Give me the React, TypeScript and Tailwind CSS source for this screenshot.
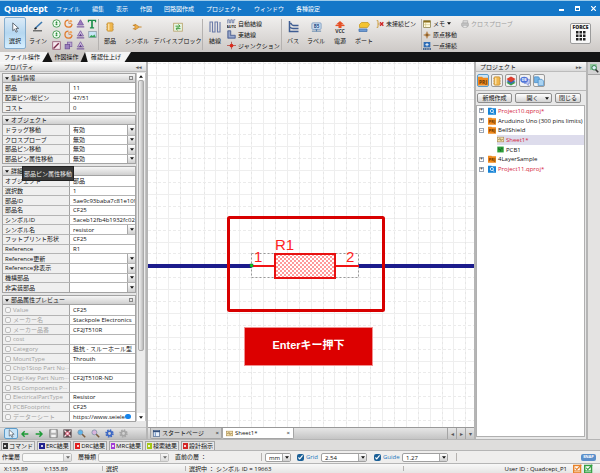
import { useState, type ReactNode } from "react";

const FONT = "font-['Open_Sans','Noto_Sans_CJK_JP',sans-serif]";
const MONO_TEXT = "'Open Sans', sans-serif";

/* ---------- icons ---------- */

function Glyph({ size = 10, children }: { size?: number; children: ReactNode }) {
  return (
    <svg width={size} height={size} viewBox="0 0 12 12" fill="none" className="shrink-0" aria-hidden="true">
      {children}
    </svg>
  );
}

function Letter({ x = 6, y = 8, s = 5, fill = "#fff", children }: { x?: number; y?: number; s?: number; fill?: string; children: string }) {
  return (
    <text x={x} y={y} fontSize={s} fontWeight="700" textAnchor="middle" fill={fill} fontFamily={MONO_TEXT}>
      {children}
    </text>
  );
}

const CursorIcon = ({ size = 10 }: { size?: number }) => (
  <Glyph size={size}>
    <path d="M3 1l6.500 6H6.500l1.500 3.500-1.500.6L5 7.800 3 9.500z" fill="#fff" stroke="#4a5560" strokeWidth=".9" />
  </Glyph>
);
const LineIcon = () => (
  <Glyph size={12}>
    <path d="M3 7.500L10 1" stroke="#3b78b0" strokeWidth="1.600" />
    <path d="M2.500 8l2-1" stroke="#222" strokeWidth="1.500" />
    <path d="M1 9.800h9" stroke="#555" strokeWidth="1.200" />
  </Glyph>
);
const CircleIcon = () => (
  <Glyph size={9}>
    <circle cx="6" cy="6" r="5" fill="#effaf0" stroke="#4f9f5a" strokeWidth="1.300" />
    <path d="M6 2.800l1.500 2.500h-3z" fill="#2e8f3d" />
    <circle cx="6" cy="7" r="1.300" fill="#2e8f3d" />
  </Glyph>
);
const ArcIcon = () => (
  <Glyph size={9}>
    <path d="M6 1.500a4.700 4.700 0 1 0 4.700 5" stroke="#e07a2c" strokeWidth="1.700" />
    <path d="M6.500 6V2.500M6.500 6H10" stroke="#d98c55" strokeWidth="1.200" />
    <circle cx="9" cy="3" r="1.800" fill="#f0a65f" />
  </Glyph>
);
const TriangleIcon = ({ inner = false }: { inner?: boolean }) => (
  <Glyph size={9}>
    <path d="M6 1l4 7H2z" fill={inner ? "#c9b6dc" : "#9a7bbd"} stroke="#75559d" />
    <path d="M1 10.500h10" stroke="#75559d" strokeWidth="1.500" />
    {inner && <path d="M4 8l2-3 2 3z" fill="#5b3b86" />}
  </Glyph>
);
const TextIcon = () => (
  <Glyph size={10}>
    <path d="M1 1h10v3H9.500V2.500H7V10h1.500v1.300h-5V10H5V2.500H2.500V4H1z" fill="#1d8f4b" />
  </Glyph>
);
const PictureIcon = () => (
  <Glyph size={9}>
    <rect x="1" y="2" width="10" height="8" fill="#c9e6f7" stroke="#8a9aa5" />
    <path d="M1.500 9.500l3-3 2 1.500 2-2 2 3.500z" fill="#36a256" />
  </Glyph>
);
const EditIcon = () => (
  <Glyph size={9}>
    <rect x="1" y="1" width="10" height="10" fill="#f6eaf0" stroke="#8d4b68" />
    <path d="M2 10L9 3" stroke="#7b2947" strokeWidth="1.800" />
  </Glyph>
);
const CopyIcon = () => (
  <Glyph size={9}>
    <rect x="4.500" y="1.500" width="6" height="6" fill="#bba6d3" stroke="#7d60a2" />
    <rect x="1.500" y="4.500" width="6" height="6" fill="#9a7fbc" stroke="#6d4f94" />
  </Glyph>
);
const PartIcon = ({ size = 10 }: { size?: number }) => (
  <Glyph size={size}>
    <path d="M1.500 3h9M1.500 6h9M1.500 9h9" stroke="#c9a460" strokeWidth=".9" />
    <rect x="2.500" y="1" width="7" height="10" rx="1" fill="#efb64d" stroke="#c08a30" strokeWidth=".8" />
    <path d="M4.500 2v8" stroke="#fbe3ad" strokeWidth="1.600" />
  </Glyph>
);
const SymbolIcon = () => (
  <Glyph>
    <path d="M1 4h3M1 8h3M9 6h2.500" stroke="#c88a32" strokeWidth="1.300" />
    <path d="M3.500 2.500v7L9 6z" fill="#eeb04a" stroke="#c07c25" strokeWidth=".8" />
  </Glyph>
);
const DeviceIcon = () => (
  <Glyph>
    <rect x=".8" y="1.500" width="10.400" height="9.500" fill="#e9f6e3" stroke="#b8a26a" />
    <path d="M3 5h5M6.500 3l2 2-2 2M9 8H4M5.500 6.500L3.500 8l2 1.800" stroke="#3c9a3a" strokeWidth="1.200" />
  </Glyph>
);
const WireIcon = () => (
  <Glyph size={12}>
    <path d="M1 11V1h2.500v10H6V1h2.500v10H11V1" stroke="#6b7ba8" strokeWidth="1.100" />
  </Glyph>
);
const AutoWireIcon = () => (
  <Glyph size={9}>
    <path d="M1 6V1h2v4h2V1h2v4h2V1h2" stroke="#5a6b9c" />
    <Letter y={11.500} s={5} fill="#222">AUTO</Letter>
  </Glyph>
);
const BundleIcon = () => (
  <Glyph size={9}>
    <path d="M1 1h4v6h6v4H1z" fill="#7183b1" stroke="#4b5f92" />
    <path d="M3 2v7h7" stroke="#b7c3df" />
  </Glyph>
);
const JunctionIcon = () => (
  <Glyph size={9}>
    <path d="M0 6h12M6 1v10" stroke="#b45b52" strokeWidth="1.200" />
    <circle cx="6" cy="6" r="2.500" fill="#d92a1c" />
  </Glyph>
);
const BusIcon = () => (
  <Glyph size={12}>
    <path d="M2.500 0v10.500h9M2.500 2.500h1.500q1 2 2.500 2H11.500M2.500 6q2 1.500 3.500 1.500H11.500" stroke="#3f5d92" strokeWidth="1.500" />
  </Glyph>
);
const LabelIcon = () => (
  <Glyph size={11}>
    <rect x="1" y="1" width="10" height="7" rx="1" fill="#cfe0f3" stroke="#7e9cc0" />
    <path d="M1 10h10" stroke="#587fa9" />
    <path d="M5 8l1 3 1-3z" fill="#4b79ad" />
    <Letter y={6.500} s={5} fill="#274f86">B5</Letter>
  </Glyph>
);
const VccIcon = () => (
  <Glyph size={12}>
    <path d="M6 0l4 3.500H7.500V7h-3V3.500H2z" fill="#e65026" />
    <path d="M1.500 4.500h9" stroke="#e65026" strokeWidth="1.200" />
    <Letter y={11.500} s={5} fill="#333">VCC</Letter>
  </Glyph>
);
const PortIcon = () => (
  <Glyph size={12}>
    <path d="M3.500 1.500h6.500l1.500 2-2 3H1.500V3.500z" fill="#f4c431" stroke="#c79b25" strokeWidth=".8" />
    <path d="M1 8h8v2.500H1z" fill="#6e9bd3" stroke="#4876b1" strokeWidth=".8" />
  </Glyph>
);
const NoPinIcon = () => (
  <Glyph size={8}>
    <path d="M1 1h2v10H1M3 6h3" stroke="#c9962d" strokeWidth="1.300" />
    <path d="M6 3.500l5 5M11 3.500l-5 5" stroke="#cf2222" strokeWidth="2" />
  </Glyph>
);
const MemoIcon = () => (
  <Glyph size={8}>
    <rect x="1" y="1" width="10" height="10" fill="#fffbe0" stroke="#7c7135" />
    <path d="M1 2.500h10" stroke="#8c6f1d" strokeWidth="2.500" />
    <path d="M4 4v7M1 7h10" stroke="#cbb96d" strokeWidth=".8" />
  </Glyph>
);
const OriginIcon = () => (
  <Glyph size={8}>
    <path d="M6 0l2 4 4 2-4 2-2 4-2-4-4-2 4-2z" fill="#b88a55" />
    <circle cx="6" cy="6" r="1.500" fill="#7e5526" />
  </Glyph>
);
const OnePointIcon = () => (
  <Glyph size={8}>
    <rect x="1" y="0" width="10" height="8" fill="#2f6db5" />
    <path d="M6 1.500v5M3.500 4h5" stroke="#fff" strokeWidth="1.300" />
    <path d="M0 10.500h12" stroke="#234f87" strokeWidth="2" strokeDasharray="2 .6" />
  </Glyph>
);
const PrinterIcon = () => (
  <Glyph size={8}>
    <path d="M3 1h7v4H3z" fill="#ddd" stroke="#aaa" />
    <rect x="1" y="4.500" width="10" height="5" rx="1" fill="#c5c5c5" stroke="#a5a5a5" />
    <path d="M3 8h6v3H3z" fill="#eee" stroke="#aaa" />
  </Glyph>
);
const ArrowIcon = ({ back = false }: { back?: boolean }) => (
  <Glyph size={8}>
    <path d={back ? "M11 6H2M5.500 2L1.500 6l4 4" : "M1 6h9M6.500 2l4 4-4 4"} stroke="#1e9a37" strokeWidth="2.200" />
  </Glyph>
);
const SaveIcon = () => (
  <Glyph size={9}>
    <rect x="1" y="1" width="10" height="10" fill="#b4b4b4" stroke="#777" />
    <path d="M3 1h6v4H3zM3 7.500h6V11H3z" fill="#f3f3f3" />
  </Glyph>
);
const FitIcon = () => (
  <Glyph size={9}>
    <rect x=".5" y=".5" width="11" height="11" fill="#5a4a4e" />
    <path d="M2 2l8 8M10 2l-8 8" stroke="#fff" strokeWidth="1.600" />
    <rect x="4" y="4" width="4" height="4" fill="#f4eef0" stroke="#e24566" />
  </Glyph>
);
const ZoomIcon = ({ tint }: { tint: string }) => (
  <Glyph size={9}>
    <circle cx="4.500" cy="4.500" r="3.300" fill={tint} stroke="#7a8fa8" strokeWidth="1" />
    <path d="M7 7l4 4" stroke="#7a5a3c" strokeWidth="2" />
  </Glyph>
);
const GearIcon = ({ color }: { color: string }) => (
  <Glyph size={9}>
    <circle cx="6" cy="6" r="4.600" stroke={color} strokeWidth="2" strokeDasharray="2 1.600" />
    <circle cx="6" cy="6" r="3" stroke={color} strokeWidth="2.200" />
  </Glyph>
);
const SheetIcon = () => (
  <Glyph size={7}>
    <rect x=".5" y="2" width="11" height="8" fill="#f3e0ad" stroke="#a98a4c" />
    <path d="M2 6h2l1-2 2 4 1-2h2" stroke="#7d6430" />
  </Glyph>
);
const PcbIcon = () => (
  <Glyph size={7}>
    <rect x=".5" y="1" width="11" height="10" fill="#2e9e3b" />
    <path d="M3 3v3h3v3M8 3v2h2" stroke="#14601e" strokeWidth="1.200" />
  </Glyph>
);
const StartIcon = () => (
  <Glyph size={7}>
    <rect x=".5" y="1" width="11" height="10" fill="#e8f0fa" stroke="#34517d" />
    <path d="M0 2.500h12" stroke="#34517d" strokeWidth="2.500" />
    <path d="M4 4v7" stroke="#5b83bd" strokeWidth="1.500" />
  </Glyph>
);
const ProjectIcon = ({ size = 8, blue = false }: { size?: number; blue?: boolean }) => (
  <Glyph size={size}>
    <path d="M0 1h5l1 1h6v9.500H0z" fill={blue ? "#1583d6" : "#ef8a1d"} />
    {blue ? (
      <>
        <circle cx="5.800" cy="6" r="2.400" stroke="#fff" strokeWidth="1.200" />
        <path d="M7 7.500l2 2.500" stroke="#fff" strokeWidth="1.200" />
      </>
    ) : (
      <Letter y={9} s={6} fill="#6b3503">PRJ</Letter>
    )}
  </Glyph>
);
const LayersIcon = () => (
  <Glyph>
    <path d="M6 5.500l5.500 2.500L6 11.500.5 8z" fill="#3ca44a" />
    <path d="M6 3.500l5.500 2.500L6 9.500.5 6z" fill="#3a68b8" />
    <path d="M6 .5l5.500 3L6 7.500.5 3.500z" fill="#dd3c2c" />
  </Glyph>
);
const ChatIcon = () => (
  <Glyph>
    <path d="M5 4h6.500v5H10v2.500L7.500 9H5z" fill="#b9c5ef" stroke="#6e83d0" strokeWidth=".7" />
    <ellipse cx="5" cy="4.500" rx="4.700" ry="3.700" fill="#4f74d8" />
    <Letter x={5} y={6.200} s={4}>DB</Letter>
  </Glyph>
);
const PagesIcon = () => (
  <Glyph>
    <path d="M.5 1h5l1 1.500V8h-6z" fill="#72b3e6" stroke="#4187c4" strokeWidth=".8" />
    <path d="M5 4h4.500l2 2v5.500H5z" fill="#a9d3f2" stroke="#4187c4" strokeWidth=".8" />
  </Glyph>
);
const FindIcon = () => (
  <Glyph size={9}>
    <rect x="0" y="0" width="9" height="8" fill="#8fc79b" />
    <circle cx="5.500" cy="5" r="3" fill="#d9f0f5" stroke="#2c7444" strokeWidth="1.200" />
    <path d="M7.500 7.500l3.500 3.500" stroke="#333" strokeWidth="2" />
  </Glyph>
);
const CheckBadge = ({ color }: { color: string }) => (
  <Glyph size={9}>
    <rect x="0" y="1" width="11" height="11" fill={color} />
    <rect x="2" y="3" width="7" height="5.500" fill="#fff" />
    <path d="M3 5l2 2.500L11 1" stroke={color} strokeWidth="1.600" />
    <path d="M1.500 10.300h8" stroke="#fff" strokeWidth=".8" />
  </Glyph>
);
const Down = () => (
  <svg width="4" height="3" viewBox="0 0 5 3" className="shrink-0" aria-hidden="true">
    <path d="M0 0h5L2.500 3z" fill="#111" />
  </svg>
);

/* ---------- shared controls ---------- */

function Pick({ label, value, className = "" }: { label: string; value: string; className?: string }) {
  return (
    <span className={`flex min-w-0 items-stretch bg-white ${className}`}>
      <select aria-label={label} defaultValue={value} className="min-w-0 flex-1 appearance-none truncate bg-transparent pl-[3px] outline-none">
        <option value={value}>{value}</option>
      </select>
      <span className="pointer-events-none flex w-2 items-center justify-center border-l border-[#a8a8a8] bg-linear-to-b from-white to-[#cfcfcf]">
        <Down />
      </span>
    </span>
  );
}

function BigTool({ icon, label, className = "", active = false }: { icon: ReactNode; label: string; className?: string; active?: boolean }) {
  return (
    <button
      className={`flex h-8 shrink-0 flex-col items-center justify-between rounded-xs border pt-[3px] pb-[3px] whitespace-nowrap ${
        active ? "border-[#86aece] bg-linear-to-b from-[#dcebf7] via-[#b5d7f0] to-[#d6efff]" : "border-transparent"
      } ${className}`}
    >
      <span className="flex h-3 items-center">{icon}</span>
      <span>{label}</span>
    </button>
  );
}

function SmallTool({ icon, label, muted = false, children }: { icon: ReactNode; label: string; muted?: boolean; children?: ReactNode }) {
  return (
    <button className={`flex h-[11px] items-center gap-[2px] whitespace-nowrap ${muted ? "text-[#9c9c9c]" : ""}`}>
      {icon}
      <span>{label}</span>
      {children}
    </button>
  );
}

const Divider = () => <span className="my-[2px] w-px shrink-0 self-stretch bg-[#b5b2b0]" />;

/* ---------- title bar and ribbon ---------- */

const MENUS = [
  "ファイル", "編集", "表示", "作図", "回路図作成", "プロジェクト", "ウィンドウ", "各種設定",
];

function TitleBar() {
  return (
    <header className="flex h-4 shrink-0 items-center border-t border-[#9ccbea] bg-[#1477c8] pr-1 pl-1 text-white">
      <span className="w-[52px] text-[9px] leading-none font-bold">Quadcept</span>
      <nav className="flex flex-1 gap-3 whitespace-nowrap">
        {MENUS.map((m) => (
          <button key={m}>{m}</button>
        ))}
      </nav>
      <div className="flex items-center gap-[11px]">
        <button aria-label="最小化" className="h-[5px] w-[5px] border-b-2 border-white" />
        <button aria-label="元に戻す" className="h-[5px] w-[5px] border border-t-2 border-white" />
        <button aria-label="閉じる">
          <svg width="5" height="5" viewBox="0 0 5 5"><path d="M0 0l5 5M5 0L0 5" stroke="#fff" strokeWidth="1.200" /></svg>
        </button>
      </div>
    </header>
  );
}

const DRAW_TOOLS: [string, ReactNode][] = [
  ["円", <CircleIcon />], ["円弧", <ArcIcon />], ["三角", <TriangleIcon />], ["文字", <TextIcon />],
  ["楕円", <CircleIcon />], ["扇形", <ArcIcon />], ["多角形", <TriangleIcon inner />], ["画像", <PictureIcon />],
  ["編集", <EditIcon />], ["複製", <CopyIcon />], ["図形", <TriangleIcon inner />],
];

function Ribbon() {
  return (
    <div className="flex h-9 shrink-0 items-start bg-linear-to-b from-[#f1f0ef] to-[#cdc9c6] pt-px pl-1">
      <BigTool icon={<CursorIcon size={11} />} label="選択" active className="w-[22px]" />
      <BigTool icon={<LineIcon />} label="ライン" className="w-6" />
      <div className="grid grid-cols-[repeat(4,12px)] pt-px">
        {DRAW_TOOLS.map(([name, icon]) => (
          <button key={name} aria-label={name} className="flex h-[11px] items-center justify-center">
            {icon}
          </button>
        ))}
      </div>
      <Divider />
      <BigTool icon={<PartIcon />} label="部品" className="w-[22px]" />
      <BigTool icon={<SymbolIcon />} label="シンボル" className="w-8" />
      <BigTool icon={<DeviceIcon />} label="デバイスブロック" className="w-[49px]" />
      <Divider />
      <BigTool icon={<WireIcon />} label="結線" className="w-6" />
      <div className="w-[54px] pt-px">
        <SmallTool icon={<AutoWireIcon />} label="自動結線" />
        <SmallTool icon={<BundleIcon />} label="束結線" />
        <SmallTool icon={<JunctionIcon />} label="ジャンクション" />
      </div>
      <Divider />
      <BigTool icon={<BusIcon />} label="バス" className="w-[22px]" />
      <BigTool icon={<LabelIcon />} label="ラベル" className="w-6" />
      <BigTool icon={<VccIcon />} label="電源" className="w-6" />
      <BigTool icon={<PortIcon />} label="ポート" className="w-6" />
      <div className="w-[45px] pt-px">
        <SmallTool icon={<NoPinIcon />} label="未接続ピン" />
      </div>
      <Divider />
      <div className="w-[39px] pt-px pl-px">
        <SmallTool icon={<MemoIcon />} label="メモ"><Down /></SmallTool>
        <SmallTool icon={<OriginIcon />} label="原点移動" />
        <SmallTool icon={<OnePointIcon />} label="一点接続" />
      </div>
      <div className="flex-1 pt-px">
        <SmallTool icon={<PrinterIcon />} label="クロスプローブ" muted />
      </div>
      <button className="mt-[6px] mr-[9px] flex h-[21px] w-[21px] flex-col items-center rounded-xs border border-[#9b9b9b] bg-[#f8f8f8]">
        <span className="text-[5px] leading-[7px] font-extrabold text-[#222]">FORCE</span>
        <svg width="10" height="10" viewBox="0 0 10 10" aria-hidden="true">
          {[0, 3.500, 7].map((y) => [0, 3.500, 7].map((x) => <rect key={`${x}-${y}`} x={x} y={y} width="2.500" height="2.500" fill="#222" />))}
        </svg>
      </button>
    </div>
  );
}

function RibbonTabs() {
  const tab = "flex h-full items-center justify-center whitespace-nowrap";
  return (
    <div className="flex h-[10px] shrink-0 bg-[#141414]">
      <button className={`${tab} w-12 bg-[#f4f4f4] pr-1 [clip-path:polygon(0_0,100%_0,88%_100%,0_100%)]`}>ファイル操作</button>
      <button className={`${tab} w-[37px] bg-[#cdc9c6] [clip-path:polygon(0_0,100%_0,88%_100%,12%_100%)]`}>作図操作</button>
      <button className={`${tab} w-[46px] bg-[#f4f4f4] pr-1 [clip-path:polygon(0_0,100%_0,86%_100%,6%_100%)]`}>確認仕上げ</button>
    </div>
  );
}

/* ---------- property panel ---------- */

type Row = [name: string, value: string, kind?: "pick"];

const SUMMARY: Row[] = [["部品", "11"], ["配置ピン/総ピン", "47/51"], ["コスト", "0"]];
const OBJECT: Row[] = [
  ["ドラッグ移動", "有効", "pick"], ["クロスプローブ", "無効", "pick"],
  ["部品ピン移動", "無効", "pick"], ["部品ピン属性移動", "無効", "pick"],
];
const DETAIL: Row[] = [
  ["オブジェクト", "部品"], ["選択数", "1"], ["部品ID", "5ae9c93baba7c81e109"], ["部品名", "CF25"],
  ["シンボルID", "5aceb12fb4b1932fc02"], ["シンボル名", "resistor", "pick"], ["フットプリント形状", "CF25"],
  ["Reference", "R1"], ["Reference更新", "", "pick"], ["Reference非表示", "", "pick"],
  ["機構部品", "", "pick"], ["非実装部品", "", "pick"],
];
const PREVIEW: Row[] = [
  ["Value", "CF25"], ["メーカー名", "Stackpole Electronics"], ["メーカー品番", "CF2JT510R"], ["cost", ""],
  ["Category", "抵抗 - スルーホール型"], ["MountType", "Throuth"], ["Chip1Stop Part Nu···", ""],
  ["Digi-Key Part Num···", "CF2JT510R-ND"], ["RS Components P···", ""], ["ElectricalPartType", "Resistor"],
  ["PCBFootprint", "CF25"], ["データーシート", "https://www.seiele"],
];

function Section({ title, rows, height, boxed = false, checks = false }: { title: string; rows: Row[]; height: string; boxed?: boolean; checks?: boolean }) {
  return (
    <section className="border-x border-b border-[#a3a3a3]">
      <h3 className="flex h-[10px] items-center gap-[2px] border-y border-[#a3a3a3] bg-linear-to-b from-[#f6f6f6] to-[#cfcfcf] px-[2px] font-normal">
        <Down />
        <span className="flex-1">{title}</span>
        {boxed && <span className="h-[4px] w-[4px] border border-[#888]" />}
      </h3>
      <div className={`grid auto-rows-fr ${height}`}>
        {rows.map(([name, value, kind], i) => (
          <div key={name} className={`grid min-h-0 grid-cols-[67px_minmax(0,1fr)] ${i ? "border-t border-[#b4b4b4]" : ""}`}>
            {checks ? (
              <label className="flex items-center gap-[2px] overflow-hidden border-r border-[#a3a3a3] bg-[#efefef] pl-[2px] whitespace-nowrap text-[#a2a2a2]">
                <input type="checkbox" disabled className="h-[6px] w-[6px] shrink-0 appearance-none rounded-xs border border-[#bdbdbd] bg-[#f5f5f5]" />
                {name}
              </label>
            ) : (
              <span className="flex items-center overflow-hidden border-r border-[#a3a3a3] bg-[#efefef] pl-[2px] whitespace-nowrap">{name}</span>
            )}
            {kind === "pick" ? (
              <Pick label={name} value={value} />
            ) : (
              <span className="flex items-center overflow-hidden bg-white pl-[3px] whitespace-nowrap">
                {value}
                {name === "データーシート" && <span className="h-[5px] w-[6px] shrink-0 rounded-full bg-[#1684ea]" />}
              </span>
            )}
          </div>
        ))}
      </div>
    </section>
  );
}

function PanelTitle({ title, mark }: { title: string; mark: string }) {
  return (
    <h2 className="flex h-[10px] shrink-0 items-center justify-between border-b border-[#bcbcbc] bg-linear-to-b from-[#fbfbfb] to-[#d9d9d9] px-1 font-normal">
      <span>{title}</span>
      <span className="text-[5px] font-bold text-[#555]">{mark}</span>
    </h2>
  );
}

const PANEL_TOOLS: [string, ReactNode][] = [
  ["戻る", <ArrowIcon back />], ["進む", <ArrowIcon />], ["保存", <SaveIcon />], ["全体表示", <FitIcon />],
  ["拡大", <ZoomIcon tint="#5db4ea" />], ["縮小", <ZoomIcon tint="#d9b3dc" />],
  ["設定", <GearIcon color="#3a66c4" />], ["その他", <GearIcon color="#a5a5a5" />],
];

function PropertyPanel() {
  return (
    <aside className="relative flex w-[148px] shrink-0 flex-col border-r-2 border-[#b5b5b5] bg-[#e6e6e6]">
      <PanelTitle title="プロパティ" mark="◂◂" />
      <div className="flex min-h-0 flex-1 pt-px pl-[2px]">
        <div className="flex min-w-0 flex-1 flex-col gap-[2px]">
          <Section title="集計情報" rows={SUMMARY} height="h-[29px]" boxed />
          <Section title="オブジェクト" rows={OBJECT} height="h-[38px]" />
          <Section title="詳細" rows={DETAIL} height="h-[116px]" />
          <Section title="部品属性プレビュー" rows={PREVIEW} height="h-[116px]" boxed checks />
        </div>
        <div className="mb-[6px] flex w-[10px] flex-col items-center border-x border-[#c4c4c4] bg-[#ececec]">
          <span className="flex h-[7px] w-full rotate-180 items-center justify-center bg-white"><Down /></span>
          <span className="h-[78%] w-[6px] rounded-xs border border-[#aaa] bg-linear-to-r from-[#f0f0f0] via-[#d8d8d8] to-[#b9b9b9]" />
          <span className="flex-1" />
          <span className="flex h-[8px] w-full items-center justify-center bg-white"><Down /></span>
        </div>
      </div>
      <div role="tooltip" className="absolute top-[104px] left-[22px] flex h-[15px] items-center border border-[#222] bg-[#383838] px-px whitespace-nowrap text-[#eee]">
        部品ピン属性移動
      </div>
      <div className="flex h-3 shrink-0 items-center border-t border-[#c2c2c2] bg-linear-to-b from-[#e5e5e5] to-[#bdbdbd] pl-1">
        <button aria-label="選択" className="flex h-[11px] w-[14px] items-center justify-center rounded-xs border border-[#5c9bc9] bg-[#c8e4f8]">
          <CursorIcon size={9} />
        </button>
        {PANEL_TOOLS.map(([name, icon]) => (
          <button key={name} aria-label={name} className="flex w-[14px] items-center justify-center">
            {icon}
          </button>
        ))}
      </div>
    </aside>
  );
}

/* ---------- drawing area ---------- */

function Schematic() {
  const lines = Array.from({ length: 100 }, (_, i) => i);
  return (
    <svg className="absolute inset-0 h-full w-full" aria-label="回路図">
      <defs>
        <pattern id="hatch" width="4" height="4" patternUnits="userSpaceOnUse">
          <rect width="4" height="4" fill="#fff" />
          <rect width="2" height="2" fill="#ff9a9a" />
          <rect x="2" y="2" width="2" height="2" fill="#ff9a9a" />
        </pattern>
      </defs>
      {lines.map((i) => {
        const x = Math.round(7.900 + i * 11.900) + 0.5;
        const y = Math.round(1 + i * 11.900) + 0.5;
        const solidX = i % 2 === 0 ? false : true;
        return (
          <g key={i}>
            <line x1={x} x2={x} y1="0" y2="100%" stroke={solidX ? "#eeeeee" : "#f1f1f1"} />
            {!solidX && <line x1={x} x2={x} y1="0" y2="100%" stroke="#e6e6e6" strokeDasharray="2 3" />}
            <line y1={y} y2={y} x1="0" x2="100%" stroke={solidX ? "#eeeeee" : "#ebebeb"} strokeDasharray={solidX ? "none" : "3 2"} />
          </g>
        );
      })}
      <path d="M0 204h104M210 204h1200" stroke="#1c1c8c" strokeWidth="4" />
      <rect x="103.500" y="191.500" width="107" height="24" fill="none" stroke="#999" strokeDasharray="2 2" />
      <path d="M104 204h23M187 204h24" stroke="#f01414" strokeWidth="2" />
      <rect x="127" y="192" width="60" height="24" fill="url(#hatch)" stroke="#e81010" strokeWidth="2" />
      <rect x="102" y="202" width="3" height="3" fill="#18d018" stroke="#064" strokeWidth=".5" />
      <g fill="#ff1e1e" fontSize="15" fontFamily="'Liberation Sans', sans-serif">
        <text x="127" y="188">R1</text>
        <text x="106" y="200">1</text>
        <text x="198" y="200">2</text>
      </g>
      <rect x="80.500" y="155.500" width="155" height="93" rx="1" fill="none" stroke="#d80000" strokeWidth="3" />
    </svg>
  );
}

function Canvas() {
  return (
    <main className="flex min-w-0 flex-1 flex-col">
      <div className="relative min-h-0 flex-1 overflow-hidden bg-white">
        <Schematic />
        <div className="absolute top-[265px] left-[96px] flex h-[39px] w-[129px] items-center justify-center border border-[#f09090] bg-[#dc0000] pb-[3px] font-['Liberation_Sans','Noto_Sans_CJK_JP',sans-serif] text-[11px] font-bold whitespace-nowrap text-white">
          Enterキー押下
        </div>
      </div>
      <div className="flex h-3 shrink-0 items-stretch border-t border-[#999] bg-linear-to-b from-[#e6e6e6] to-[#c4c4c4] pl-[2px]">
        <button className="flex w-[72px] items-center gap-[2px] rounded-b-xs border border-t-0 border-[#a5a5a5] bg-[#cfcfcf] px-[2px]">
          <StartIcon />
          <span className="flex-1 text-left">スタートページ</span>
          <span>×</span>
        </button>
        <button className="flex w-[72px] items-center gap-[2px] rounded-b-xs border border-t-0 border-[#a5a5a5] bg-white px-[3px]">
          <SheetIcon />
          <span className="flex-1 text-left">Sheet1*</span>
          <span>×</span>
        </button>
        <span className="flex-1" />
        {["◂", "▸", "▾"].map((m) => (
          <button key={m} className="w-[9px] border-l border-[#a5a5a5] text-[#555]">{m}</button>
        ))}
      </div>
    </main>
  );
}

/* ---------- project panel ---------- */

type Node = { name: string; icon: ReactNode; mark?: "+" | "−"; red?: boolean; child?: boolean; selected?: boolean };
const TREE: Node[] = [
  { name: "Project10.qproj*", icon: <ProjectIcon blue />, mark: "+", red: true },
  { name: "Aruduino Uno (300 pins limits)", icon: <ProjectIcon />, mark: "+" },
  { name: "BellShield", icon: <ProjectIcon />, mark: "−" },
  { name: "Sheet1*", icon: <SheetIcon />, red: true, child: true, selected: true },
  { name: "PCB1", icon: <PcbIcon />, child: true },
  { name: "4LayerSample", icon: <ProjectIcon />, mark: "+" },
  { name: "Project11.qproj*", icon: <ProjectIcon blue />, mark: "+", red: true },
];
const VIEWS: [string, ReactNode][] = [
  ["プロジェクト", <ProjectIcon size={10} />], ["部品", <PartIcon />], ["レイヤー", <LayersIcon />],
  ["データベース", <ChatIcon />], ["ページ", <PagesIcon />],
];

function ProjectPanel() {
  const button = "flex h-[10px] items-center justify-center rounded-xs border border-[#8e8e8e] bg-linear-to-b from-white to-[#d2d2d2] whitespace-nowrap";
  return (
    <aside className="flex w-[114px] shrink-0 flex-col border-x-2 border-[#b5b5b5] bg-[#e8e8e8]">
      <PanelTitle title="プロジェクト" mark="▸▸" />
      <div className="flex gap-[2px] border-b border-[#b9b9b9] px-px pt-[2px] pb-[3px]">
        {VIEWS.map(([name, icon], i) => (
          <button
            key={name}
            aria-label={name}
            className={`flex h-[13px] w-3 items-center justify-center rounded-xs border ${i ? "border-[#9a9a9a] bg-[#f2f2f2]" : "border-[#5c9bc9] bg-[#c8e4f8]"}`}
          >
            {icon}
          </button>
        ))}
      </div>
      <div className="flex gap-[3px] py-[2px] pl-px">
        <button className={`${button} w-[35px]`}>新規作成</button>
        <button className={`${button} w-[37px] gap-[6px] pl-2`}>開く<Down /></button>
        <button className={`${button} w-[26px]`}>閉じる</button>
      </div>
      <div className="mr-px mb-[2px] min-h-0 flex-1 overflow-hidden border border-[#b0b0b0] bg-white">
        <ul className="grid h-[68px] auto-rows-fr">
          {TREE.map((n) => (
            <li key={n.name} className={`flex min-h-0 ${n.child ? "pl-5" : "pl-[2px]"}`}>
              <button className={`flex w-full items-center gap-[2px] whitespace-nowrap ${n.selected ? "bg-[#dddcec]" : ""} ${n.red ? "text-[#d41c3c]" : ""}`}>
                {n.mark && (
                  <span className="mr-[2px] flex h-[5px] w-[5px] items-center justify-center border border-[#9aa5b5] text-[5px] leading-none text-[#222]">{n.mark}</span>
                )}
                {n.icon}
                <span>{n.name}</span>
              </button>
            </li>
          ))}
        </ul>
      </div>
    </aside>
  );
}

/* ---------- bottom bars ---------- */

const OUTPUTS: [string, string][] = [
  ["コマンド", "bg-[#333333]"], ["ERC結果", "bg-[#23238e]"], ["DRC結果", "bg-[#e02020]"],
  ["MRC結果", "bg-[#a33bd6]"], ["検索結果", "bg-[#a2c614]"], ["設計指示", "bg-[#d42626]"],
];

function OutputTabs() {
  return (
    <div className="flex h-[11px] shrink-0 items-stretch gap-[2px] border-t border-[#b5b5b5] bg-[#dedddc] pt-px pl-px">
      {OUTPUTS.map(([name, color]) => (
        <button key={name} className="flex w-[34px] items-center gap-px border border-b-0 border-[#a5a5a5] bg-[#e6e6e6] px-px whitespace-nowrap">
          <span className={`flex h-[6px] w-[6px] items-center justify-center ${color}`}>
            <span className="h-[2px] w-[2px] bg-white/80" />
          </span>
          {name}
        </button>
      ))}
    </div>
  );
}

function Toggle({ label }: { label: string }) {
  const [on, setOn] = useState(true);
  return (
    <label className="flex items-center gap-[2px] text-[#1e78c0]">
      <input type="checkbox" checked={on} onChange={() => setOn(!on)} className="h-[7px] w-[7px] accent-[#1a5f96]" />
      {label}
    </label>
  );
}

function LayerBar() {
  const box = "h-[9px] rounded-xs border border-[#a0a0a0] overflow-hidden";
  return (
    <div className="flex h-[13px] shrink-0 items-center border-t border-[#b5b5b5] bg-[#efeeed] pl-[2px] whitespace-nowrap">
      <span className="w-5">作業層</span>
      <Pick label="作業層" value="" className={`${box} w-[50px] opacity-60`} />
      <span className="ml-[6px] w-5">層種類</span>
      <Pick label="層種類" value="" className={`${box} w-[71px] opacity-60`} />
      <span className="ml-[6px] w-[86px]">直前の層 ：</span>
      <Divider />
      <Pick label="単位" value="mm" className={`${box} ml-[3px] w-[26px]`} />
      <div className="ml-[6px] w-6"><Toggle label="Grid" /></div>
      <Pick label="Grid" value="2.54" className={`${box} w-[46px]`} />
      <div className="ml-[7px] w-7"><Toggle label="Guide" /></div>
      <Pick label="Guide" value="1.27" className={`${box} mr-2 w-[46px]`} />
      <Divider />
      <span className="flex-1" />
      <button className="mr-1 h-[7px] w-[15px] rounded-xs bg-[#5b8fca] text-[4px] leading-none font-bold text-white">SNAP</button>
    </div>
  );
}

function StatusBar() {
  return (
    <footer className="flex h-[10px] shrink-0 items-center border-t border-[#b5b5b5] bg-linear-to-b from-[#f8f8f8] to-[#e6e5e4] pr-[7px] pl-1 whitespace-nowrap">
      <span className="w-10">X:135.89</span>
      <span className="w-[58px]">Y:135.89</span>
      <Divider />
      <span className="w-[82px] pl-[3px]">選択</span>
      <Divider />
      <span className="w-[217px] pl-[3px]">選択中 ： シンボル ID = 19663</span>
      <Divider />
      <span className="flex-1 pr-[6px] text-right">User ID : Quadcept_P1</span>
      <span className="flex gap-[2px]">
        <CheckBadge color="#e8822a" />
        <CheckBadge color="#35a043" />
      </span>
    </footer>
  );
}

export default function App() {
  return (
    <div className={`flex h-screen w-full flex-col overflow-hidden bg-[#e4e3e2] text-[6px] leading-[8px] font-normal text-[#111] ${FONT}`}>
      <TitleBar />
      <Ribbon />
      <RibbonTabs />
      <div className="flex min-h-0 flex-1">
        <PropertyPanel />
        <Canvas />
        <ProjectPanel />
        <div className="w-3 shrink-0 bg-[#e4e3e2]">
          <button aria-label="検索" className="flex h-[13px] w-full items-center justify-center border-b border-[#a5a5a5] bg-[#d2d2d2]">
            <FindIcon />
          </button>
        </div>
      </div>
      <OutputTabs />
      <LayerBar />
      <StatusBar />
    </div>
  );
}
